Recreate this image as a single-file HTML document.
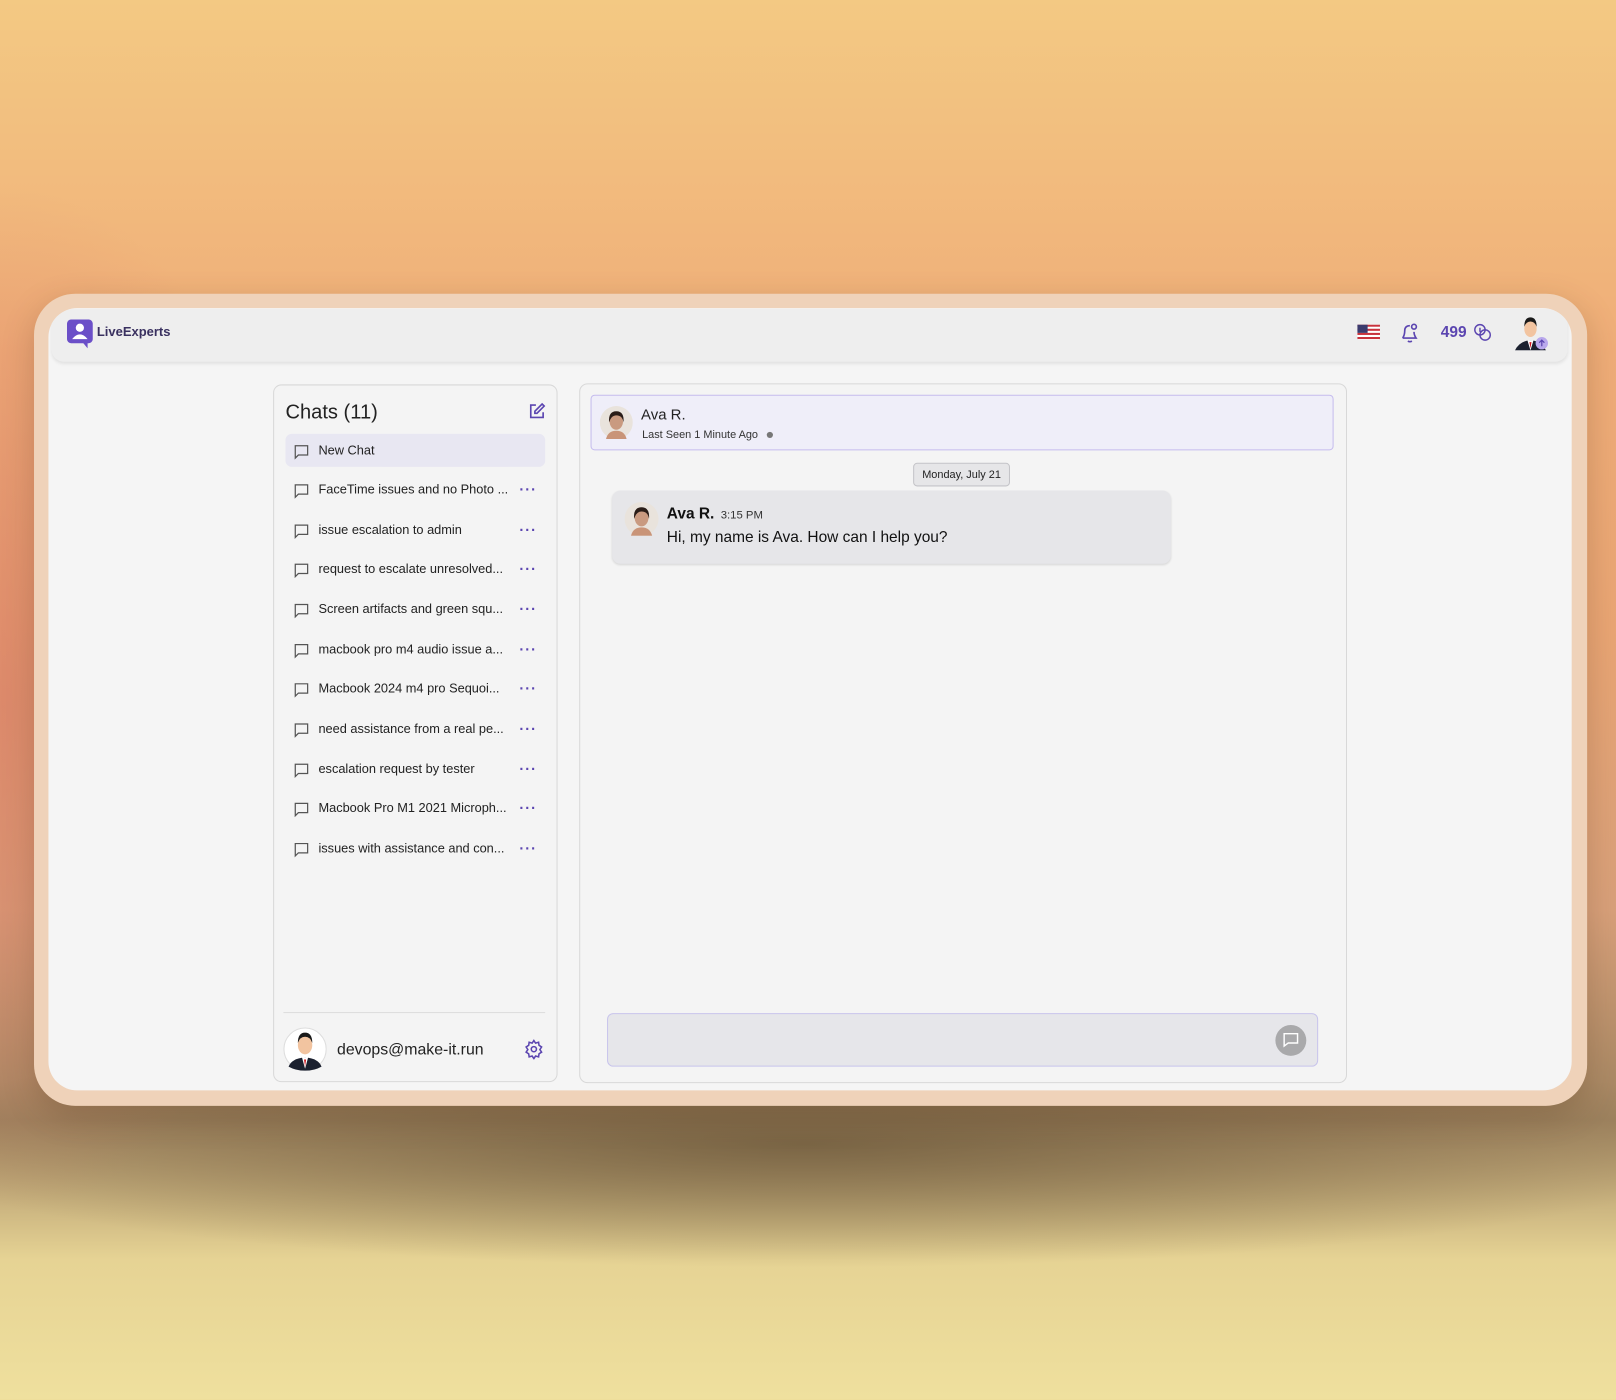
<!DOCTYPE html>
<html><head><meta charset="utf-8"><style>
html,body{margin:0;padding:0;width:1616px;height:1400px;overflow:hidden}
body{background:#eedc98}
#w{position:absolute;left:0;top:0;width:1568px;height:1358px;transform:scale(1.030612);transform-origin:0 0;font-family:"Liberation Sans",sans-serif;
background:
radial-gradient(ellipse 900px 120px at 780px 1110px,rgba(110,90,60,.8),rgba(110,90,60,0) 100%),
radial-gradient(ellipse 300px 500px at 0px 680px,rgba(215,120,100,.6),rgba(215,120,100,0)),
linear-gradient(180deg,#f3c983 0%,#f2bc7e 12%,#efad78 25%,#e9a574 45%,#d8a07a 65%,#a08460 80%,#e6d394 90%,#efe09e 100%);}
.a{position:absolute}
#frame{left:33px;top:285px;width:1507px;height:788px;border-radius:40px;background:#efd2b9;box-shadow:0 10px 30px rgba(90,60,30,.25)}
#scr{left:47px;top:299px;width:1478px;height:759px;border-radius:28px;background:#f5f5f5;overflow:hidden}
#hdr{left:3px;top:1px;width:1471px;height:51px;background:#eeeeee;border-radius:0 0 12px 12px;box-shadow:0 2px 3px rgba(0,0,0,.08)}
.panel{background:#f4f4f4;border:1px solid #d8d8d8;border-radius:8px}
.row{position:absolute;left:277px;width:252px;height:32px;font-size:12.4px;color:#222;line-height:32px}
.row svg{position:absolute;left:8px;top:10px}
.row span{position:absolute;left:32px}
.dots{position:absolute;left:227px;top:0;color:#5b45b0;font-size:14px;letter-spacing:1px;font-weight:bold}
</style></head><body><div id="w">
<div id="frame" class="a"></div>
<div id="scr" class="a">
 <div id="hdr" class="a"></div>
</div>
<svg width="0" height="0" style="position:absolute"><defs>
<symbol id="face" viewBox="0 0 32 32"><circle cx="16" cy="16" r="16" fill="#e9e3dc"/><path d="M6 32 Q8 24 16 24 Q24 24 26 32Z" fill="#c99478"/><ellipse cx="16" cy="15" rx="6.5" ry="8" fill="#c99a80"/><path d="M9 16 Q8 5 16 5 Q24 5 23 16 Q22 9 16 9 Q11 9 9 16Z" fill="#2a1d18"/></symbol>
</defs></svg>
<!-- header content -->
<svg class="a" style="left:65px;top:310px" width="26" height="28" viewBox="0 0 26 28"><rect x="0" y="0" width="25" height="23" rx="4" fill="#6b4fc8"/><path d="M15 22 L20 28 L20 22Z" fill="#6b4fc8"/><circle cx="12.5" cy="8" r="4" fill="#fff"/><path d="M5 19 Q12.5 10 20 19Z" fill="#fff"/></svg>
<div class="a" style="left:94px;top:315px;font-size:12.6px;font-weight:bold;color:#3a3160">LiveExperts</div>
<svg class="a" style="left:1317px;top:315px" width="22" height="15"><rect width="22" height="15" rx="2" fill="#fff"/><g fill="#c8323c"><rect y="0" width="22" height="2"/><rect y="4" width="22" height="2"/><rect y="8" width="22" height="2"/><rect y="12" width="22" height="2"/></g><rect width="10" height="8" fill="#3b3b6e"/></svg>
<svg class="a" style="left:1357px;top:312px" width="22" height="22" viewBox="0 0 22 22" fill="none" stroke="#5b45b0" stroke-width="1.6"><path d="M4 16 Q6 13 6 9 Q6 4 11 4 M4 16 H17 Q15 13 15 10"/><path d="M9 19 Q11 20 13 19"/><circle cx="15" cy="5" r="2.3"/></svg>
<div class="a" style="left:1398px;top:314px;font-size:15px;font-weight:bold;color:#5b45b0">499</div>
<svg class="a" style="left:1429px;top:313px" width="20" height="20" fill="none" stroke="#5b45b0" stroke-width="1.4"><circle cx="7" cy="7" r="5"/><circle cx="12" cy="12" r="5"/><path d="M7 5v4"/></svg>
<svg class="a" style="left:1468px;top:304px" width="36" height="36"><path d="M2 36 Q6 27 17 26 Q28 27 32 36Z" fill="#1c2130"/><path d="M14 26 L17 36 L20 26Z" fill="#fff"/><path d="M16 28 L17 34 L18 28Z" fill="#d0121b"/><ellipse cx="17" cy="15" rx="6" ry="8" fill="#f2c4a0"/><path d="M11 13 Q11 4 17 4 Q23 4 23 13 Q21 8 17 8 Q13 8 11 13Z" fill="#1a1a1a"/><circle cx="28" cy="29" r="6" fill="#b9a8ec"/><path d="M28 32v-6M25.5 28.5l2.5-2.5 2.5 2.5" stroke="#5b45b0" stroke-width="1.2" fill="none"/></svg>

<!-- chats panel -->
<div class="a panel" style="left:265px;top:373px;width:274px;height:675px"></div>
<div class="a" style="left:277px;top:389px;font-size:19.5px;color:#222">Chats (11)</div>
<svg class="a" style="left:512px;top:390px" width="18" height="18" fill="none" stroke="#5b45b0" stroke-width="1.6"><path d="M8 3H3v12h12v-5"/><path d="M14 2l2 2-7 7H7V9z"/></svg>
<div class="row" style="top:421px;background:#e8e7f2;border-radius:6px"><svg width="15" height="15" fill="none" stroke="#555" stroke-width="1.2"><path d="M1.5 1.5h12v9h-9l-3 3z"/></svg><span>New Chat</span></div>
<div class="row" style="top:459px"><svg width="15" height="15" fill="none" stroke="#555" stroke-width="1.2"><path d="M1.5 1.5h12v9h-9l-3 3z"/></svg><span>FaceTime issues and no Photo ...</span><b class="dots">···</b></div>
<div class="row" style="top:498px"><svg width="15" height="15" fill="none" stroke="#555" stroke-width="1.2"><path d="M1.5 1.5h12v9h-9l-3 3z"/></svg><span>issue escalation to admin</span><b class="dots">···</b></div>
<div class="row" style="top:536px"><svg width="15" height="15" fill="none" stroke="#555" stroke-width="1.2"><path d="M1.5 1.5h12v9h-9l-3 3z"/></svg><span>request to escalate unresolved...</span><b class="dots">···</b></div>
<div class="row" style="top:575px"><svg width="15" height="15" fill="none" stroke="#555" stroke-width="1.2"><path d="M1.5 1.5h12v9h-9l-3 3z"/></svg><span>Screen artifacts and green squ...</span><b class="dots">···</b></div>
<div class="row" style="top:614px"><svg width="15" height="15" fill="none" stroke="#555" stroke-width="1.2"><path d="M1.5 1.5h12v9h-9l-3 3z"/></svg><span>macbook pro m4 audio issue a...</span><b class="dots">···</b></div>
<div class="row" style="top:652px"><svg width="15" height="15" fill="none" stroke="#555" stroke-width="1.2"><path d="M1.5 1.5h12v9h-9l-3 3z"/></svg><span>Macbook 2024 m4 pro Sequoi...</span><b class="dots">···</b></div>
<div class="row" style="top:691px"><svg width="15" height="15" fill="none" stroke="#555" stroke-width="1.2"><path d="M1.5 1.5h12v9h-9l-3 3z"/></svg><span>need assistance from a real pe...</span><b class="dots">···</b></div>
<div class="row" style="top:730px"><svg width="15" height="15" fill="none" stroke="#555" stroke-width="1.2"><path d="M1.5 1.5h12v9h-9l-3 3z"/></svg><span>escalation request by tester</span><b class="dots">···</b></div>
<div class="row" style="top:768px"><svg width="15" height="15" fill="none" stroke="#555" stroke-width="1.2"><path d="M1.5 1.5h12v9h-9l-3 3z"/></svg><span>Macbook Pro M1 2021 Microph...</span><b class="dots">···</b></div>
<div class="row" style="top:807px"><svg width="15" height="15" fill="none" stroke="#555" stroke-width="1.2"><path d="M1.5 1.5h12v9h-9l-3 3z"/></svg><span>issues with assistance and con...</span><b class="dots">···</b></div>
<div class="a" style="left:275px;top:982px;width:254px;height:1px;background:#ddd"></div>
<svg class="a" style="left:275px;top:997px" width="42" height="42"><circle cx="21" cy="21" r="20.5" fill="#fff" stroke="#ddd"/><path d="M5 38 Q8 30 21 29 Q34 30 37 38 Q30 42 21 42 Q12 42 5 38Z" fill="#1c2130"/><path d="M18 29 L21 40 L24 29Z" fill="#fff"/><path d="M20 31 L21 38 L22 31Z" fill="#d0121b"/><ellipse cx="21" cy="17" rx="7" ry="9" fill="#f2c4a0"/><path d="M14 15 Q14 5 21 5 Q28 5 28 15 Q26 9 21 9 Q16 9 14 15Z" fill="#1a1a1a"/></svg>
<div class="a" style="left:327px;top:1010px;font-size:15.4px;color:#222">devops@make-it.run</div>
<svg class="a" style="left:508px;top:1008px" width="20" height="20" viewBox="0 0 24 24" fill="none" stroke="#5b45b0" stroke-width="1.8"><circle cx="12" cy="12" r="3"/><path d="M12 2l2 3 3.5-1 .5 3.5 3 2-2 3 2 3-3 2-.5 3.5-3.5-1-2 3-2-3-3.5 1-.5-3.5-3-2 2-3-2-3 3-2 .5-3.5 3.5 1z"/></svg>

<!-- chat panel -->
<div class="a panel" style="left:562px;top:372px;width:743px;height:677px"></div>
<div class="a" style="left:573px;top:383px;width:719px;height:52px;background:#efeef9;border:1px solid #c5bcee;border-radius:4px"></div>
<svg class="a" style="left:582px;top:394px" width="32" height="32"><use href="#face"/></svg>
<div class="a" style="left:622px;top:395px;font-size:14.5px;color:#222">Ava R.</div>
<div class="a" style="left:623px;top:416px;font-size:10.6px;color:#333">Last Seen 1 Minute Ago</div>
<div class="a" style="left:744px;top:419px;width:6px;height:6px;border-radius:50%;background:#777"></div>
<div class="a" style="left:886px;top:449px;width:92px;height:21px;background:#e6e6e8;border:1px solid #c4c4c8;border-radius:4px;font-size:10.6px;color:#222;text-align:center;line-height:22px">Monday, July 21</div>
<div class="a" style="left:594px;top:476px;width:542px;height:71px;background:#e6e6e9;border-radius:8px;box-shadow:0 1px 2px rgba(0,0,0,.12)"></div>
<svg class="a" style="left:606px;top:487px" width="33" height="33"><use href="#face"/></svg>
<div class="a" style="left:647px;top:490px;font-size:15px;font-weight:bold;color:#111">Ava R. <span style="font-size:11px;font-weight:normal;color:#333;margin-left:2px">3:15 PM</span></div>
<div class="a" style="left:647px;top:513px;font-size:15px;color:#111">Hi, my name is Ava. How can I help you?</div>
<div class="a" style="left:589px;top:983px;width:688px;height:50px;background:#e6e6ea;border:1px solid #c8c4ec;border-radius:6px"></div>
<svg class="a" style="left:1237px;top:994px" width="31" height="31"><circle cx="15.5" cy="15.5" r="15" fill="#a9a9ab"/><path d="M9 9h13v9h-9l-4 3z" fill="none" stroke="#fff" stroke-width="1.4"/></svg>
</div></body></html>
